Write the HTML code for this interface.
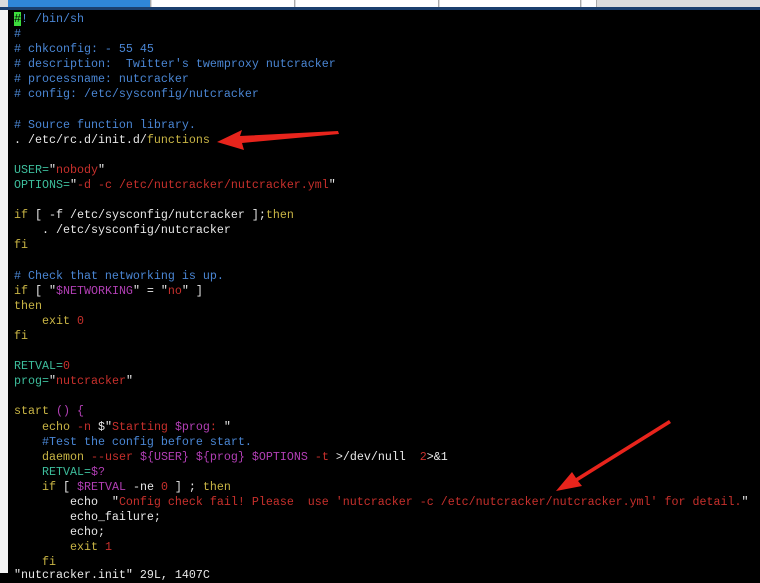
<!DOCTYPE html>
<html><head><meta charset="utf-8"><style>
html,body{margin:0;padding:0;width:760px;height:573px;overflow:hidden;background:#000}
.top{position:absolute;left:0;top:0;width:760px;height:8px;background:#dcdcdc}
.tab{position:absolute;top:0;height:7px;background:#fff;border-right:1px solid #aaa}
.line2{position:absolute;left:0;top:7px;width:760px;height:3px;background:#1b3f6e}
.strip{position:absolute;left:0;top:10px;width:8px;height:563px;background:#f4f4f4}
pre{position:absolute;left:14px;top:12px;margin:0;font-family:"Liberation Mono",monospace;font-size:11.67px;line-height:15.1px;color:#e8e8e8}
.c{color:#4a86d4}.g{color:#3dbd9c}.r{color:#c8302c}.y{color:#c9b545}.m{color:#b23fb5}
.cur{background:#3ddc3d;color:#000}
</style></head><body>
<div class="top"></div>
<div class="tab" style="left:8px;width:142px;background:#2f86d8"></div>
<div class="tab" style="left:152px;width:142px"></div>
<div class="tab" style="left:296px;width:142px"></div>
<div class="tab" style="left:440px;width:140px"></div>
<div class="tab" style="left:582px;width:14px"></div>
<div class="line2"></div>
<div class="strip"></div>
<pre><span class="cur">#</span><span class="c">! /bin/sh</span>
<span class="c">#</span>
<span class="c"># chkconfig: - 55 45</span>
<span class="c"># description:  Twitter's twemproxy nutcracker</span>
<span class="c"># processname: nutcracker</span>
<span class="c"># config: /etc/sysconfig/nutcracker</span>

<span class="c"># Source function library.</span>
. /etc/rc.d/init.d/<span class="y">functions</span>

<span class="g">USER=</span>"<span class="r">nobody</span>"
<span class="g">OPTIONS=</span>"<span class="r">-d -c /etc/nutcracker/nutcracker.yml</span>"

<span class="y">if</span> [ -f /etc/sysconfig/nutcracker ];<span class="y">then</span>
    . /etc/sysconfig/nutcracker
<span class="y">fi</span>

<span class="c"># Check that networking is up.</span>
<span class="y">if</span> [ "<span class="m">$NETWORKING</span>" = "<span class="r">no</span>" ]
<span class="y">then</span>
    <span class="y">exit</span> <span class="r">0</span>
<span class="y">fi</span>

<span class="g">RETVAL=</span><span class="r">0</span>
<span class="g">prog=</span>"<span class="r">nutcracker</span>"

<span class="y">start</span> <span class="m">()</span> <span class="m">{</span>
    <span class="y">echo</span> <span class="r">-n</span> $"<span class="r">Starting </span><span class="m">$prog</span><span class="r">: </span>"
    <span class="c">#Test the config before start.</span>
    <span class="y">daemon</span> <span class="r">--user</span> <span class="m">${USER}</span> <span class="m">${prog}</span> <span class="m">$OPTIONS</span> <span class="r">-t</span> &gt;/dev/null  <span class="r">2</span>&gt;&amp;1
    <span class="g">RETVAL=</span><span class="m">$?</span>
    <span class="y">if</span> [ <span class="m">$RETVAL</span> -ne <span class="r">0</span> ] ; <span class="y">then</span>
        echo  "<span class="r">Config check fail! Please  use 'nutcracker -c /etc/nutcracker/nutcracker.yml' for detail.</span>"
        echo_failure;
        echo;
        <span class="y">exit</span> <span class="r">1</span>
    <span class="y">fi</span></pre>
<pre style="top:568px">"nutcracker.init" 29L, 1407C</pre>
<svg width="760" height="573" style="position:absolute;left:0;top:0">
<polygon points="338,131 240,136 242,130 217,142 244,150 242,143 339,134" fill="#e8241c"/>
<polygon points="669,420 576,478 572,472 556,491 582,486 578,481 671,423" fill="#e8241c"/>
</svg>
</body></html>
